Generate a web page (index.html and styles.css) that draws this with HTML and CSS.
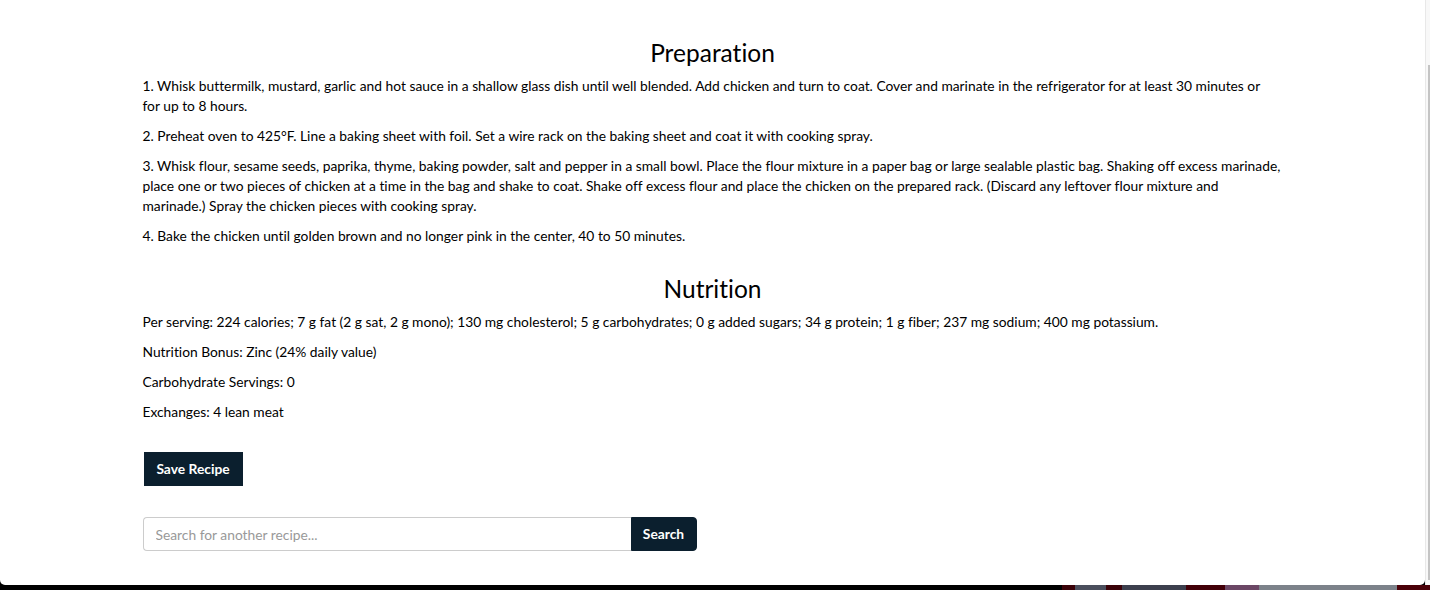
FILE: index.html
```html
<!DOCTYPE html>
<html lang="en">
<head>
<meta charset="utf-8">
<title>Recipe</title>
<link rel="stylesheet" href="styles.css">
</head>
<body>
<div class="viewport">
  <div class="main">
    <div class="card">
      <div class="container">
        <section class="section">
          <h3 class="section-title">Preparation</h3>
          <p>1. Whisk buttermilk, mustard, garlic and hot sauce in a shallow glass dish until well blended. Add chicken and turn to coat. Cover and marinate in the refrigerator for at least 30 minutes or for&nbsp;up to 8 hours.</p>
          <p>2. Preheat oven to 425°F. Line a baking sheet with foil. Set a wire rack on the baking sheet and coat it with cooking spray.</p>
          <p>3. Whisk flour, sesame seeds, paprika, thyme, baking powder, salt and pepper in a small bowl. Place the flour mixture in a paper bag or large sealable plastic bag. Shaking off excess marinade, place one or two pieces of chicken at a time in the bag and shake to coat. Shake off excess flour and place the chicken on the prepared rack. (Discard any leftover flour mixture and marinade.) Spray the chicken pieces with cooking spray.</p>
          <p>4. Bake the chicken until golden brown and no longer pink in the center, 40 to 50 minutes.</p>
        </section>

        <section class="section section-next">
          <h3 class="section-title">Nutrition</h3>
          <p>Per serving: 224 calories; 7 g fat (2 g sat, 2 g mono); 130 mg cholesterol; 5 g carbohydrates; 0 g added sugars; 34 g protein; 1 g fiber; 237 mg sodium; 400 mg potassium.</p>
          <p>Nutrition Bonus: Zinc (24% daily value)</p>
          <p>Carbohydrate Servings: 0</p>
          <p>Exchanges: 4 lean meat</p>
        </section>

        <div class="save-row">
          <button class="btn btn-dark save-btn" type="button">Save Recipe</button>
        </div>

        <form class="search-group">
          <input class="search-input" type="text" placeholder="Search for another recipe...">
          <button class="btn btn-dark search-btn" type="button">Search</button>
        </form>
      </div>
    </div>
    <div class="scrollbar">
      <div class="scroll-thumb"></div>
    </div>
  </div>
  <div class="bg-strip">
    <span class="seg seg-black"></span>
    <span class="seg seg-red s1"></span>
    <span class="seg seg-blue s2"></span>
    <span class="seg seg-red s3"></span>
    <span class="seg seg-slate s4"></span>
    <span class="seg seg-red s5"></span>
    <span class="seg seg-mauve s6"></span>
    <span class="seg seg-gray s7"></span>
    <span class="seg seg-red s8"></span>
  </div>
</div>
</body>
</html>
```

FILE: styles.css
```css
* {
  box-sizing: border-box;
}

html, body {
  margin: 0;
  padding: 0;
  background: #000;
  overflow: hidden;
}

body {
  font-family: Lato, "Open Sans", Arial, sans-serif;
  font-size: 13.8px;
  line-height: 20px;
  color: #000;
  font-variant-ligatures: none;
}

.viewport {
  width: 1430px;
  height: 590px;
  display: flex;
  flex-direction: column;
}

.main {
  display: flex;
  flex: 0 0 585px;
  height: 585px;
}

.card {
  width: 1425px;
  height: 585px;
  background: #fff;
  border-radius: 0 0 5px 5px;
  padding-top: 20px;
}

.container {
  width: 1140px;
  margin: 0 auto;
}

.section-title {
  font-size: 24.5px;
  font-weight: 400;
  line-height: 26px;
  text-align: center;
  margin: 20px 0 10px;
}

.section-next .section-title {
  margin-top: 30px;
}

p {
  margin: 0 0 10px;
}

.save-row {
  margin-top: 30px;
  padding-left: 1px;
}

.btn {
  font-family: Lato, "Open Sans", Arial, sans-serif;
  font-size: 13.8px;
  font-weight: 700;
  line-height: 20px;
  padding: 6px 12px;
  border: 1px solid #0b1f2e;
  cursor: pointer;
  font-variant-ligatures: none;
}

.btn-dark {
  background: #0b1f2e;
  color: #fff;
}

.save-btn {
  border-radius: 0;
  height: 34px;
  width: 99px;
  padding: 6px 0;
  text-align: center;
}

.search-group {
  display: flex;
  width: 554px;
  margin-top: 31px;
}

.search-input {
  flex: 1;
  height: 34px;
  padding: 6px 12px;
  font-family: Lato, "Open Sans", Arial, sans-serif;
  font-size: 13.8px;
  border: 1px solid #ccc;
  border-right: 0;
  border-radius: 4px 0 0 4px;
  color: #555;
  outline: none;
}

.search-input::placeholder {
  color: #999;
}

.search-btn {
  height: 34px;
  width: 66px;
  padding: 6px 0;
  text-align: center;
  border-radius: 0 4px 4px 0;
}

.scrollbar {
  width: 5px;
  background: #f8f8f8;
  border-left: 1px solid #e8e8e8;
  position: relative;
}

.scroll-thumb {
  position: absolute;
  top: 65px;
  bottom: 5px;
  left: 2px;
  width: 2px;
  background: #c4c4c4;
}

.bg-strip {
  display: flex;
  height: 5px;
}

.seg {
  display: block;
  height: 5px;
}

.seg-black { width: 1062px; background: #000; }
.seg-red { background: #3a0208; }
.seg-blue { background: #4a4e5c; }
.seg-slate { background: #3c3f4d; }
.seg-mauve { background: #6b4765; }
.seg-gray { background: #7c828a; }

.s1 { width: 13px; }
.s2 { width: 31px; }
.s3 { width: 16px; }
.s4 { width: 64px; }
.s5 { width: 39px; background: #420008; }
.s6 { width: 34px; }
.s7 { width: 138px; }
.s8 { width: 33px; background: #4a0008; }
```
